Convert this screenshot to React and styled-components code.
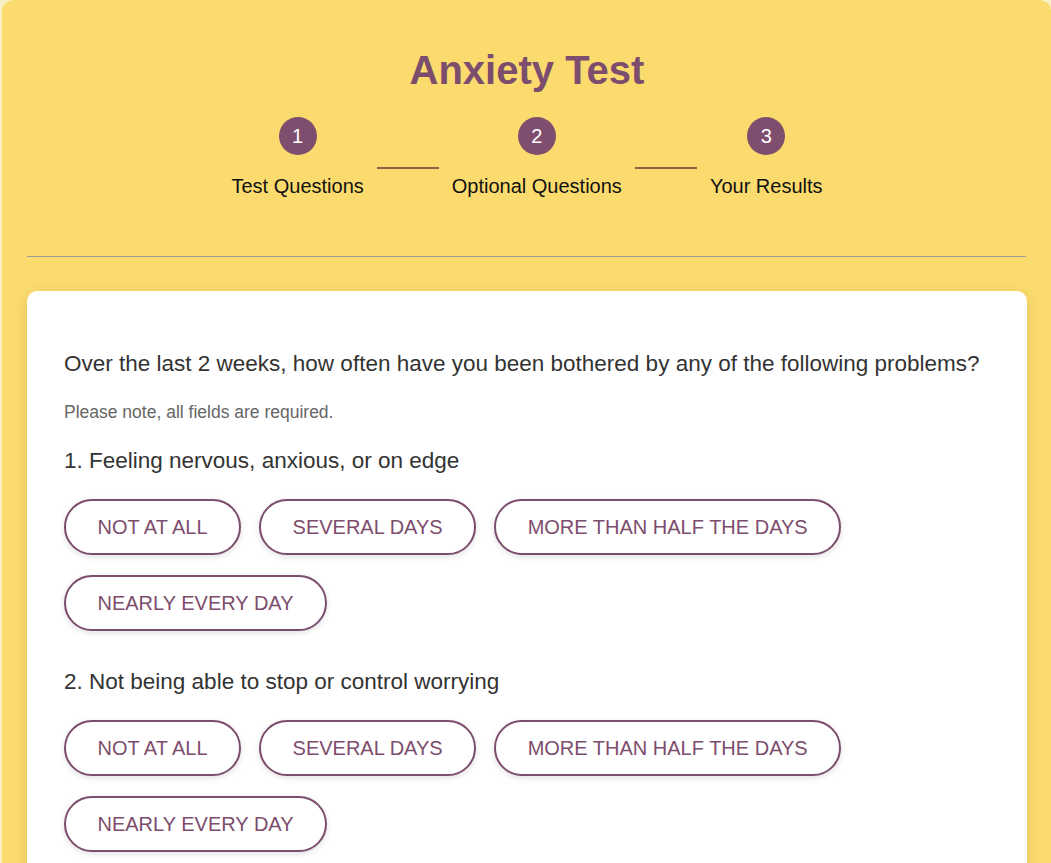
import styled, { createGlobalStyle } from "styled-components";

const GlobalStyle = createGlobalStyle`
  body {
    margin: 0;
    background: #f8efc2;
    font-family: "Liberation Sans", Arial, sans-serif;
  }
`;

const steps = ["Test Questions", "Optional Questions", "Your Results"];
const answers = [
  "Not at all",
  "Several days",
  "More than half the days",
  "Nearly every day",
];
const questions = [
  "Feeling nervous, anxious, or on edge",
  "Not being able to stop or control worrying",
  "Worrying too much about different things",
];

function Stepper() {
  return (
    <StepRow>
      {steps.map((label, index) => (
        <StepGroup key={label}>
          {index > 0 && <StepLine />}
          <Step>
            <StepCircle>{index + 1}</StepCircle>
            <StepLabel>{label}</StepLabel>
          </Step>
        </StepGroup>
      ))}
    </StepRow>
  );
}

function Question({ number, text }) {
  return (
    <QuestionBlock>
      <QuestionTitle>
        {number}. {text}
      </QuestionTitle>
      <Options>
        {answers.map((answer) => (
          <OptionBtn key={answer}>{answer}</OptionBtn>
        ))}
      </Options>
    </QuestionBlock>
  );
}

export default function App() {
  return (
    <>
      <GlobalStyle />
      <Panel>
        <Title>Anxiety Test</Title>
        <Stepper />
        <Divider />
        <Card>
          <Intro>
            Over the last 2 weeks, how often have you been bothered by any of
            the following problems?
          </Intro>
          <Note>Please note, all fields are required.</Note>
          {questions.map((q, i) => (
            <Question key={q} number={i + 1} text={q} />
          ))}
        </Card>
      </Panel>
    </>
  );
}

const Panel = styled.div`
  margin-left: 2px;
  width: 1049px;
  box-sizing: border-box;
  padding: 47px 24px 40px 25px;
  background: #fbdb6e;
  border-radius: 12px;
`;

const Title = styled.h1`
  margin: 0;
  text-align: center;
  color: #7d4d6d;
  font-size: 40px;
  line-height: 46px;
  font-weight: bold;
`;

const StepRow = styled.div`
  display: flex;
  justify-content: center;
  margin-top: 24px;
`;

const StepGroup = styled.div`
  display: flex;
  align-items: flex-start;
`;

const Step = styled.div`
  display: flex;
  flex-direction: column;
  align-items: center;
`;

const StepCircle = styled.div`
  width: 38px;
  height: 38px;
  border-radius: 50%;
  background: #7f4e6f;
  color: #fff;
  font-size: 20px;
  display: flex;
  align-items: center;
  justify-content: center;
  margin-bottom: 20px;
`;

const StepLabel = styled.div`
  font-size: 20px;
  line-height: 23px;
  color: #111;
`;

const StepLine = styled.div`
  width: 62px;
  height: 2px;
  background: #8e5c4c;
  margin: 50px 13px 0;
`;

const Divider = styled.hr`
  border: none;
  border-top: 1px solid #9c9c9c;
  margin: 58px 1px 34px 0;
`;

const Card = styled.div`
  background: #fff;
  border-radius: 10px;
  box-shadow: 0 4px 14px rgba(120, 90, 20, 0.18);
  padding: 60px 37px 40px;
`;

const Intro = styled.p`
  margin: 0;
  font-size: 22.5px;
  line-height: 26px;
  color: #333;
`;

const Note = styled.p`
  margin: 25px 0 0;
  font-size: 17.5px;
  line-height: 20px;
  color: #666;
`;

const QuestionBlock = styled.div`
  margin-top: 26px;
  & + & {
    margin-top: 38px;
  }
`;

const QuestionTitle = styled.div`
  font-size: 22.5px;
  line-height: 26px;
  color: #333;
`;

const Options = styled.div`
  display: flex;
  flex-wrap: wrap;
  gap: 20px 18px;
  margin-top: 25px;
`;

const OptionBtn = styled.button`
  height: 56px;
  padding: 0 31.5px;
  border: 2px solid #7d4d6d;
  border-radius: 28px;
  background: #fff;
  color: #7d4d6d;
  font-family: "Liberation Sans", Arial, sans-serif;
  font-size: 20px;
  text-transform: uppercase;
  box-shadow: 0 2px 6px rgba(0, 0, 0, 0.12);
  cursor: pointer;
`;
